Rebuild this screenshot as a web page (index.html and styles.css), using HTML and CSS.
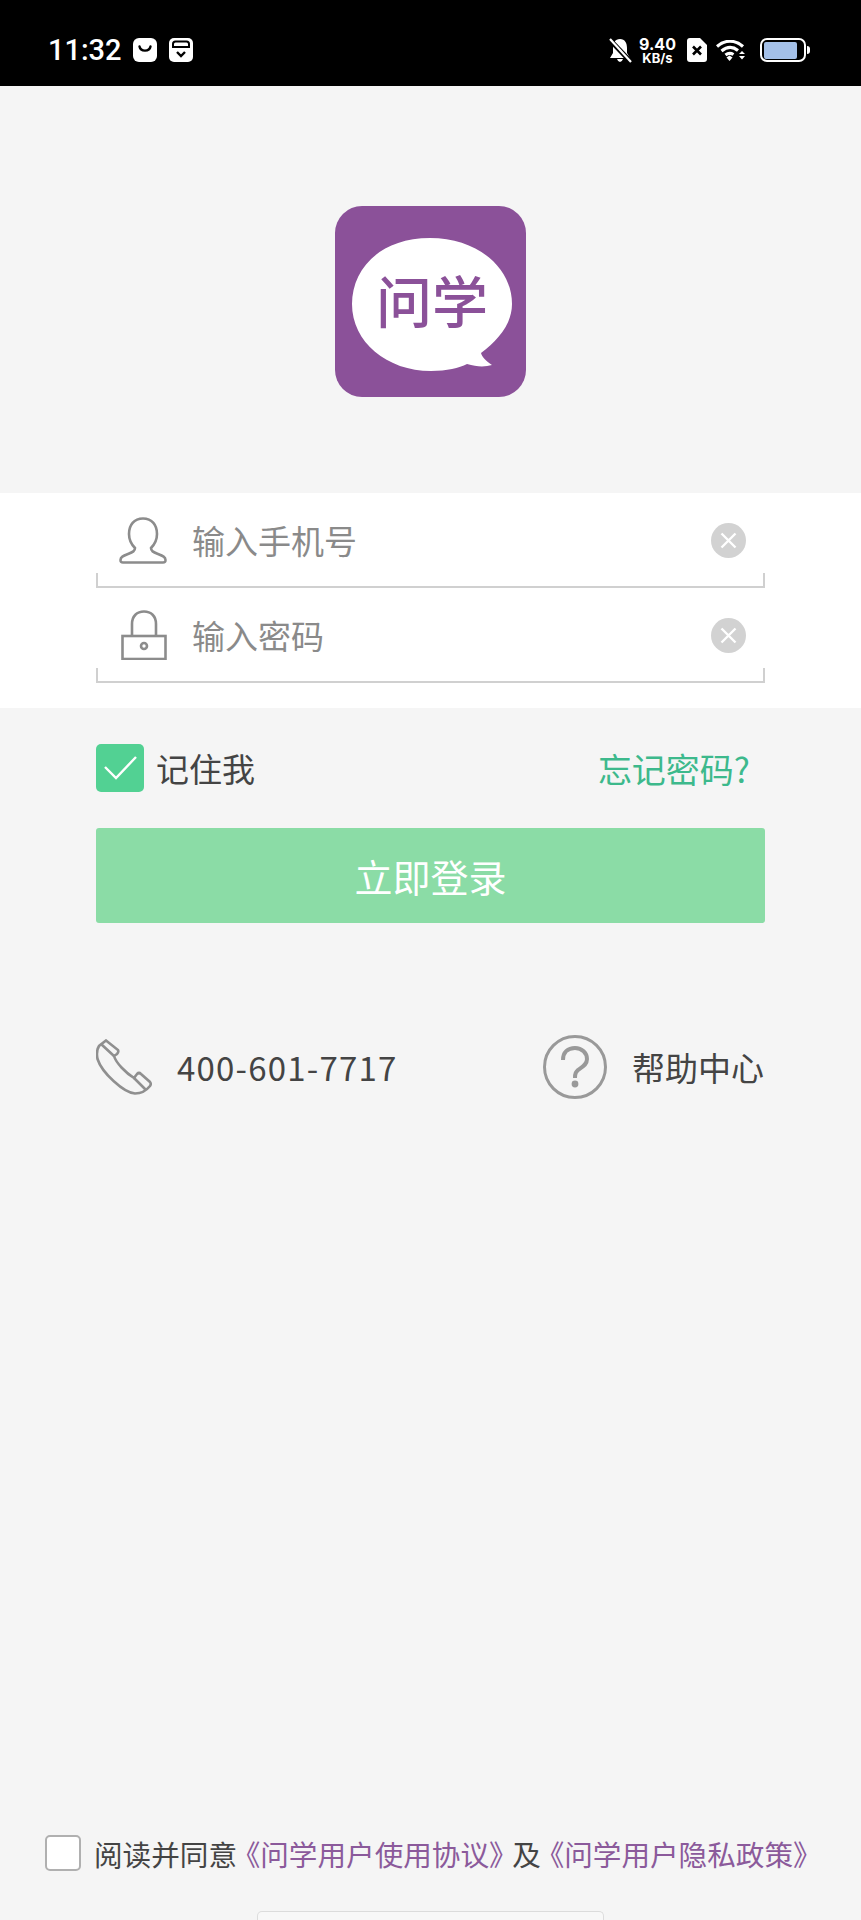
FILE: index.html
```html
<!DOCTYPE html>
<html lang="zh-CN">
<head>
    <meta charset="UTF-8">
    <meta name="viewport" content="width=device-width, initial-scale=1.0">
    <title>问学</title>
    <link rel="stylesheet" href="styles.css">
</head>
<body>
    <header class="status-bar">
        <span class="time">11:32</span>
        <svg class="status-app" viewBox="0 0 24 24"><rect width="24" height="24" rx="6" fill="#fff"/><path d="M6.5 8.5 C7.5 14 16.5 14 17.5 8.5" fill="none" stroke="#000" stroke-width="2.4" stroke-linecap="round"/></svg>
        <svg class="status-app status-app-second" viewBox="0 0 24 24"><rect width="24" height="24" rx="5" fill="#fff"/><path d="M4 10 V6 Q4 3.5 6.5 3.5 H17.5 Q20 3.5 20 6 V10" fill="none" stroke="#000" stroke-width="2"/><rect x="5" y="8" width="14" height="2" fill="#000"/><path d="M8 14 L12 18 L16 14" fill="none" stroke="#000" stroke-width="2.4"/></svg>
        <div class="status-right">
            <svg class="icon-bell" viewBox="0 0 24 25"><path d="M12 1 C7 1 5 5 5 10 V15 L2 20 H22 L19 15 V10 C19 5 17 1 12 1 Z M9 21 H15 Q14 24 12 24 Q10 24 9 21 Z" fill="#fff"/><path d="M1 1 L23 24" stroke="#000" stroke-width="5"/><path d="M2 1 L23 24" stroke="#fff" stroke-width="2.2"/></svg>
            <div class="speed"><span class="speed-num">9.40</span><span class="speed-unit">KB/s</span></div>
            <svg class="icon-sim" viewBox="0 0 20 24"><path d="M3 0 H13 L20 7 V21 Q20 24 17 24 H3 Q0 24 0 21 V3 Q0 0 3 0 Z" fill="#fff"/><path d="M6 8.5 L14 16.5 M14 8.5 L6 16.5" stroke="#000" stroke-width="2.6"/></svg>
            <svg class="icon-wifi" viewBox="0 0 30 21"><g fill="none" stroke="#fff" stroke-width="3.2"><path d="M1 6.5 C9 -0.5 19 -0.5 27 6.5"/><path d="M5.5 11 C11 6.5 17 6.5 22 10.5"/><path d="M9.5 15 C12 13 15 13 17.5 14.5"/></g><path d="M10.5 17.5 L13.5 15.5 L16.5 17.5 L13.5 21 Z" fill="#fff"/><path d="M23 14 L26 11 L29 14 Z M23 16 H29 L26 19.5 Z" fill="#fff"/></svg>
            <div class="battery"><div class="battery-level"></div></div>
            <div class="battery-nub"></div>
        </div>
    </header>

    <main class="login">
        <svg class="logo" viewBox="0 0 191 191">
            <rect width="191" height="191" rx="27" fill="#8b5199"/>
            <path d="M95 32 C44 32 17 64 17 98 C17 136 52 165 96 165 C112 165 124 162 132 158 C142 161 150 161 157 159 C151 155 147 151 146 147 C163 134 177 118 177 98 C177 62 143 32 95 32 Z" fill="#fff"/>
            <text class="logo-text" x="97" y="117" text-anchor="middle">问学</text>
        </svg>

        <section class="panel">
            <div class="field">
                <div class="field-row">
                    <svg class="icon-person" viewBox="0 0 48 47"><path d="M24 1.5 C15 1.5 10 8 10 17 C10 24 14 29 16 31 C16 34 14 35 9 37 C4 39 1.5 40 1.5 43 C1.5 45 2 45.5 4 45.5 L44 45.5 C46 45.5 46.5 45 46.5 43 C46.5 40 44 39 39 37 C34 35 32 34 32 31 C34 29 38 24 38 17 C38 8 33 1.5 24 1.5 Z" fill="none" stroke="#8c8c8c" stroke-width="2.6"/></svg>
                    <span class="placeholder">输入手机号</span>
                    <svg class="icon-clear" viewBox="0 0 35 35"><circle cx="17.5" cy="17.5" r="17.5" fill="#d2d2d2"/><path d="M10.5 10.5 L24.5 24.5 M24.5 10.5 L10.5 24.5" stroke="#fff" stroke-width="2.4"/></svg>
                </div>
                <div class="field-line"></div>
            </div>
            <div class="field">
                <div class="field-row">
                    <svg class="icon-lock" viewBox="0 0 46 50"><g fill="none" stroke="#8c8c8c" stroke-width="2.6"><rect x="1.5" y="26" width="43" height="23"/><path d="M11 26 V14 C11 6 16 1.5 23 1.5 C30 1.5 35 6 35 14 V26"/><circle cx="23" cy="36" r="3"/></g></svg>
                    <span class="placeholder">输入密码</span>
                    <svg class="icon-clear" viewBox="0 0 35 35"><circle cx="17.5" cy="17.5" r="17.5" fill="#d2d2d2"/><path d="M10.5 10.5 L24.5 24.5 M24.5 10.5 L10.5 24.5" stroke="#fff" stroke-width="2.4"/></svg>
                </div>
                <div class="field-line"></div>
            </div>
        </section>

        <div class="options">
            <label class="remember">
                <span class="check-on">
                    <svg viewBox="0 0 48 48"><path d="M9 23 L20 34 L40 13" fill="none" stroke="#fff" stroke-width="2.4"/></svg>
                </span>
                记住我
            </label>
            <a class="forgot">忘记密码?</a>
        </div>

        <button type="button" class="btn-login">立即登录</button>

        <div class="contact">
            <div class="contact-item">
                <svg class="icon-phone" viewBox="0 0 56 56"><g fill="none" stroke="#8f8f8f" stroke-width="2.6"><path d="M10 1.5 L22 11 Q23 13 21 15 L18 17 C20 24 30 34 38 39 L41 35 Q43 33 45 35 L54 43 Q55.5 45 54 47 C50 52 45 54.5 39 54.5 C28 54 6 34 1.5 20 C0.5 15 0.5 11 3 7 Z"/><path d="M5 5 L18 17 M38 39 L50 51"/></g></svg>
                <span class="phone-num">400-601-7717</span>
            </div>
            <div class="contact-item contact-help">
                <svg class="icon-help" viewBox="0 0 64 64"><g fill="none" stroke="#999" stroke-width="3"><circle cx="32" cy="32" r="30.5"/><path d="M20 25 C20 17 25 13 32 13 C39 13 44 18 44 24 C44 30 39 32 35 35 C33 37 32 38 32 43" stroke-width="4"/></g><circle cx="32" cy="49" r="3.4" fill="#999"/></svg>
                <span class="help-text">帮助中心</span>
            </div>
        </div>

        <footer class="agree">
            <span class="check-off"></span>
            <p class="agree-text">阅读并同意<a class="doc-link">《问学用户使用协议》</a>及<a class="doc-link">《问学用户隐私政策》</a></p>
        </footer>
        <div class="home-bar"></div>
    </main>
</body>
</html>
```

FILE: styles.css
```css
body {
    margin: 0;
    height: 1920px;
    display: flex;
    flex-direction: column;
    background-color: #f5f5f5;
    color: #444;
    font-family: "Noto Sans CJK SC", "Noto Sans", sans-serif;
    overflow: hidden;
}

svg {
    display: block;
    flex-shrink: 0;
}

/* status bar */
.status-bar {
    height: 86px;
    flex-shrink: 0;
    background-color: #000;
    color: #fff;
    display: flex;
    align-items: center;
    padding: 14px 51px 0 48px;
    box-sizing: border-box;
}

.time {
    font-family: Roboto, sans-serif;
    font-size: 29px;
    font-weight: 500;
    width: 85px;
}

.status-app {
    width: 24px;
    height: 24px;
}

.status-app-second {
    margin-left: 12px;
}

.status-right {
    margin-left: auto;
    display: flex;
    align-items: center;
}

.icon-bell {
    width: 24px;
    height: 25px;
}

.speed {
    margin-left: 6px;
    width: 39px;
    display: flex;
    flex-direction: column;
    align-items: center;
    font-family: Inter, sans-serif;
    font-weight: 700;
}

.speed-num {
    font-size: 16px;
    line-height: 15px;
}

.speed-unit {
    font-size: 13px;
    line-height: 12px;
}

.icon-sim {
    margin-left: 10px;
    width: 20px;
    height: 24px;
}

.icon-wifi {
    margin-left: 9px;
    width: 30px;
    height: 21px;
}

.battery {
    margin-left: 14px;
    width: 46px;
    height: 24px;
    box-sizing: border-box;
    border: 2.5px solid #fff;
    border-radius: 7px;
    padding: 1.5px;
}

.battery-level {
    width: 87%;
    height: 100%;
    background-color: #a4c0e8;
    border-radius: 2px;
}

.battery-nub {
    width: 3px;
    height: 8px;
    margin-left: 1px;
    background-color: #fff;
    border-radius: 0 3px 3px 0;
}

/* login */
.login {
    flex: 1;
    display: flex;
    flex-direction: column;
}

.logo {
    width: 191px;
    height: 191px;
    margin: 120px auto 0;
}

.logo-text {
    font-family: "Noto Sans CJK SC", sans-serif;
    font-size: 56px;
    font-weight: 500;
    fill: #8b5199;
}

.panel {
    margin-top: 96px;
    height: 215px;
    box-sizing: border-box;
    padding: 17px 96px 0;
    background-color: #fff;
}

.field {
    margin-bottom: 17px;
}

.field-row {
    height: 60px;
    display: flex;
    align-items: center;
    padding: 0 19px 0 23px;
}

.field-line {
    margin-top: 3px;
    height: 15px;
    box-sizing: border-box;
    border: 2px solid #d0d0d0;
    border-top: none;
}

.icon-person {
    width: 48px;
    height: 47px;
}

.icon-lock {
    width: 46px;
    height: 50px;
    margin-left: 2px;
}

.placeholder {
    margin-left: 25px;
    font-size: 33px;
    color: #8a8a8a;
}

.icon-clear {
    width: 35px;
    height: 35px;
    margin-left: auto;
}

.options {
    margin: 36px 96px 0;
    padding-right: 15px;
    height: 48px;
    display: flex;
    align-items: center;
    justify-content: space-between;
}

.remember {
    display: flex;
    align-items: center;
    gap: 12px;
    font-size: 33px;
    color: #444;
}

.check-on {
    width: 48px;
    height: 48px;
    border-radius: 5px;
    background-color: #52d193;
}

.forgot {
    font-size: 34px;
    color: #3db98c;
}

.btn-login {
    display: block;
    margin: 36px 96px 0;
    height: 95px;
    border: none;
    border-radius: 3px;
    background-color: #8bdca6;
    color: #fff;
    font-family: inherit;
    font-size: 38px;
}

.contact {
    margin: 112px 96px 0;
    height: 64px;
    display: flex;
    justify-content: space-between;
    align-items: center;
}

.contact-item {
    display: flex;
    align-items: center;
}

.icon-phone {
    width: 56px;
    height: 56px;
}

.phone-num {
    margin-left: 25px;
    font-size: 33px;
    letter-spacing: 1.2px;
}

.contact-help {
    margin-right: 1px;
}

.icon-help {
    width: 64px;
    height: 64px;
}

.help-text {
    margin-left: 25px;
    font-size: 33px;
}

/* agreement */
.agree {
    margin-top: auto;
    padding-left: 45px;
    height: 36px;
    display: flex;
    align-items: center;
}

.check-off {
    width: 36px;
    height: 36px;
    box-sizing: border-box;
    flex-shrink: 0;
    border: 2px solid #b0b0b0;
    border-radius: 5px;
    background-color: #fff;
}

.agree-text {
    margin: 0 0 0 13px;
    font-size: 28.6px;
    white-space: nowrap;
    color: #444;
}

.doc-link {
    margin: 0 9px;
    font-feature-settings: "halt";
    color: #8b5a9b;
}

.home-bar {
    margin: 40px auto 0;
    width: 347px;
    height: 9px;
    box-sizing: border-box;
    background-color: #f8f8f8;
    border: 1px solid #dcdcdc;
    border-bottom: none;
    border-radius: 5px 5px 0 0;
}
```
